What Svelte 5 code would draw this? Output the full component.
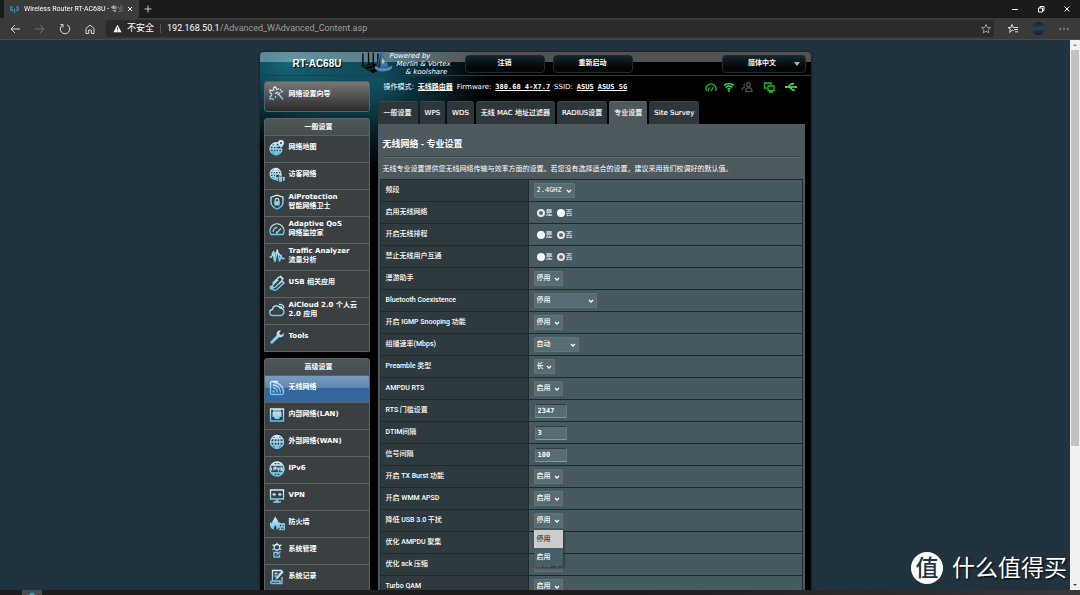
<script>
const statusLinks = [
  { label: '操作模式:', values: ['无线路由器'] },
  { label: 'Firmware:', values: ['380.68_4-X7.7'], mono: true },
  { label: 'SSID:', values: ['ASUS', 'ASUS_5G'], mono: true },
];

const tabs = ['一般设置', 'WPS', 'WDS', '无线 MAC 地址过滤器', 'RADIUS设置', '专业设置', 'Site Survey'];
let activeTab = '专业设置';

const globe = 'M8 1.5a6.5 6.5 0 1 0 0 13a6.5 6.5 0 0 0 0-13zM8 1.5v13M1.5 8h13M2.5 4.7h11M2.5 11.3h11M8 1.5c-4.2 3.5-4.2 9.5 0 13M8 1.5c4.2 3.5 4.2 9.5 0 13';

const menus = [
  {
    title: '一般设置',
    items: [
      { lines: ['网络地图'], stroke: 'M10 3.6A6 6 0 1 0 13 9M7 3v12M1 9h12M2 6h8M2 12h10M7 3c-4 3.5-4 8.5 0 12M7 15c2.5-2 3-4 3-6', fill: 'M12 0a3 3 0 0 0-3 3c0 2 3 5 3 5s3-3 3-5a3 3 0 0 0-3-3zm0 2a1 1 0 1 1 0 2a1 1 0 0 1 0-2z' },
      { lines: ['访客网络'], stroke: 'M12 6A5.5 5.5 0 1 0 7 12.5M6.5 1.5v11M1 7h11M2 4.3h9M2 9.7h5M6.5 1.5c-3.6 3-3.6 8 0 11M6.5 1.5c2 1.5 3 3 3 5', fill: 'M10 7.5a1.5 1.5 0 1 1 3 0a1.5 1.5 0 0 1-3 0zM9.5 9.5h4l-.7 5.5h-2.6zM7 10h2l.4 4H7.5zM14 10h2l-.5 4h-1.7z' },
      { lines: ['AiProtection', '智能网络卫士'], stroke: 'M8 1.2l6 2v5c0 3.5-3 5.5-6 6.8c-3-1.3-6-3.3-6-6.8v-5zM6.3 7.5v-1.5a1.7 1.7 0 0 1 3.4 0v1.5', fill: 'M5.3 7.3h5.4v4.2H5.3z' },
      { lines: ['Adaptive QoS', '网络监控家'], stroke: 'M2 13.5a7 7 0 1 1 12 0zM4.2 11a4.2 4.2 0 0 1 4-4.6M8 11.5l4-4', fill: 'M6.8 11.5a1.2 1.2 0 1 0 2.4 0a1.2 1.2 0 0 0-2.4 0z' },
      { lines: ['Traffic Analyzer', '流量分析'], stroke: 'M.5 9h2l1.5-4l2 9l2.3-12.5l2.2 12l1.700-5.5l1 2.5h2.5M3 6l2-3M5 12l1-8M9.5 5l2 3', fill: '' },
      { lines: ['USB 相关应用'], stroke: 'M3.5 8.5l6-6c2-1.5 4.5.5 3.5 3l-6.5 6.5c-2 1.5-4-.5-2.5-2.3l5-5M10 9l3-3l2 2l-7 6.5c-2 1.2-4 .5-5-.5M11 1l3.5 3', fill: 'M2 10l3 3.5l-2 1.5c-1.5 0-3-1.5-2.5-3z' },
      { lines: ['AiCloud 2.0 个人云', '2.0 应用'], stroke: 'M4 13.5a3 3 0 0 1-.5-6a4 4 0 0 1 7.5-1.5a3.8 3.8 0 0 1 1 7.5zM10 2.5c2.5-.5 4.5 1 5 3.5M10.5 4.7c1.5 0 2.3.6 2.7 2', fill: '' },
      { lines: ['Tools'], stroke: '', fill: 'M1.500 12.5l6.3-6.2C7 3.5 9 1 12 1.5L10.3 3.7l.5 1.7l1.7.5L14.8 4c.5 3-2 5-4.8 4.3L3.7 14.5c-1.5 1-3.2-.6-2.2-2z' },
    ],
  },
  {
    title: '高级设置',
    items: [
      { lines: ['无线网络'], active: true, stroke: 'M9 1.5H3a1.5 1.5 0 0 0-1.5 1.5v10A1.5 1.5 0 0 0 3 14.5h10a1.5 1.5 0 0 0 1.5-1.5v-3M4 8a4.5 4.5 0 0 1 4.5 4.5M4 5a7.5 7.5 0 0 1 7.5 7.5M4.5 2.3a10 10 0 0 1 10 10', fill: 'M3.5 10.5h2v2h-2z' },
      { lines: ['内部网络(LAN)'], stroke: 'M1.5 2h13v12h-13zM5 2v3M7 2v3M9 2v3M11 2v3', fill: 'M3.5 5h9v5h-2v2h-5v-2h-2z' },
      { lines: ['外部网络(WAN)'], stroke: globe, fill: '' },
      { lines: ['IPv6'], stroke: 'M8 1a7 7 0 1 0 0 14a7 7 0 0 0 0-14zM3 4h10M3 12h10M8 1v4M8 11v4M5 2v3M11 2v3M5 11v3M11 11v3M2.5 6.5v3M5 9.5v-3h2v1.7H5M8.5 6.5l1 3l1-3M13.5 6.5h-1.5v3h1.5v-1.5h-1.5', fill: '' },
      { lines: ['VPN'], stroke: 'M1.5 2h13v9h-13zM8 11v2.5M4 14h8M4.5 6.5h2.5M9 6.5h2.5', fill: 'M5.5 4.500v4l-2.5-2zM10.5 4.5v4l2.5-2zM6 12.5h4v2.5H6z' },
      { lines: ['防火墙'], stroke: 'M10 9h5.5v5.5H10M10 12h5.5M13 9v3M11.5 12v2.5', fill: 'M6 .8c.5 2.500 3.5 4 3.5 7.500c.7-.5.8-1.200.7-2c1.600 3 .8 7.200-3 8.500c1-2 .2-3.600-1.200-4.800c-.1 1.700-1.800 2.600-1 4.800C.8 13.700-.2 9.500 2 6.500c.1.900.4 1.500 1 2C3 5.500 6 4 6 .8z' },
      { lines: ['系统管理'], stroke: 'M8 2.5a2.800 2.800 0 1 0 0 5.600a2.800 2.800 0 0 0 0-5.600zM8 .7v1.800M8 8.100v1M3.500 2.700l2 1.200M12.500 2.700l-2 1.200M3.500 7.800l2-1.200M12.500 7.800l-2-1.200M9 10.500H5v4.500h5.500v-2.500M7.500 13l4-3.500', fill: '' },
      { lines: ['系统记录'], stroke: 'M3.5 12V1.5h9.5M13 8v6.5H2.5a1.300 1.300 0 0 1 0-2.5h8.500v2.5M5.500 4.500h3M5.500 7h2M7.500 10l6-7', fill: 'M7 8l6-6.5l1.700 1.500L8.500 9.800L6.500 10.500z' },
    ],
  },
];

const onOff = ['停用', '启用'];
const rows = [
  { label: '频段', type: 'select', options: ['2.4GHZ', '5GHZ'], value: '2.4GHZ', size: 'band' },
  { label: '启用无线网络', type: 'radio', value: '是' },
  { label: '开启无线排程', type: 'radio', value: '否' },
  { label: '禁止无线用户互通', type: 'radio', value: '否' },
  { label: '漫游助手', type: 'select', options: onOff, value: '停用' },
  { label: 'Bluetooth Coexistence', type: 'select', options: onOff, value: '停用', size: 'wide' },
  { label: '开启 IGMP Snooping 功能', type: 'select', options: onOff, value: '停用' },
  { label: '组播速率(Mbps)', type: 'select', options: ['自动'], value: '自动', size: 'medium' },
  { label: 'Preamble 类型', type: 'select', options: ['长', '短'], value: '长', size: 'short' },
  { label: 'AMPDU RTS', type: 'select', options: onOff, value: '启用' },
  { label: 'RTS 门槛设置', type: 'text', value: '2347' },
  { label: 'DTIM间隔', type: 'text', value: '3' },
  { label: '信号间隔', type: 'text', value: '100' },
  { label: '开启 TX Burst 功能', type: 'select', options: onOff, value: '启用' },
  { label: '开启 WMM APSD', type: 'select', options: onOff, value: '启用' },
  { label: '降低 USB 3.0 干扰', type: 'select', options: onOff, value: '停用', open: true },
  { label: '优化 AMPDU 聚集', type: 'select', options: onOff, value: '停用' },
  { label: '优化 ack 压缩', type: 'select', options: onOff, value: '停用' },
  { label: 'Turbo QAM', type: 'select', options: onOff, value: '启用' },
];
</script>

<svelte:head><title>Wireless Router RT-AC68U - 专业设置</title></svelte:head>

<svg class="defs" width="0" height="0" aria-hidden="true">
  <linearGradient id="ice" x1="0" y1="0" x2="0" y2="16" gradientUnits="userSpaceOnUse">
    <stop offset="0" stop-color="#e2f4fb" />
    <stop offset="1" stop-color="#58bfe8" />
  </linearGradient>
</svg>

<div class="browser">
  <div class="tabstrip">
    <div class="browser-tab">
      <svg class="favicon" viewBox="0 0 10 10"><path d="M3 1.5a3.5 3.5 0 0 0 0 5M7 1.5a3.5 3.5 0 0 1 0 5M1.5.8a5 5 0 0 0 0 6.4M8.5.8a5 5 0 0 1 0 6.4M5 4v5" /></svg>
      <span class="browser-title">Wireless Router RT-AC68U - 专业</span>
      <button class="plain" aria-label="关闭标签页"><svg viewBox="0 0 8 8"><path d="M2 2l4 4M6 2l-4 4" /></svg></button>
    </div>
    <button class="plain new-tab" aria-label="新建标签页"><svg viewBox="0 0 8 8"><path d="M4 .5v7M.5 4h7" /></svg></button>
    <div class="window-buttons">
      <button class="plain" aria-label="最小化"><svg viewBox="0 0 8 8"><path d="M1 4.5h6" /></svg></button>
      <button class="plain" aria-label="还原"><svg viewBox="0 0 8 8"><path d="M1.5 3h4v4h-4zM3 3V1.5h4v4H5.5" /></svg></button>
      <button class="plain" aria-label="关闭"><svg viewBox="0 0 8 8"><path d="M1.5 1.5l5 5M6.5 1.5l-5 5" /></svg></button>
    </div>
  </div>

  <div class="toolbar">
    <button class="plain nav" aria-label="后退"><svg viewBox="0 0 12 12"><path d="M11 6H2M6 2L2 6l4 4" /></svg></button>
    <button class="plain nav dim" aria-label="前进"><svg viewBox="0 0 12 12"><path d="M1 6h9M6 2l4 4l-4 4" /></svg></button>
    <button class="plain nav" aria-label="刷新"><svg viewBox="0 0 12 12"><path d="M4 1.8A4.7 4.7 0 1 0 8 1.8M4 4.5V1.5H1.5" /></svg></button>
    <button class="plain nav" aria-label="主页"><svg viewBox="0 0 12 12"><path d="M2 5.5L6 2l4 3.5V10.5H7.3V7H4.7v3.5H2z" /></svg></button>
    <div class="address">
      <svg class="warn" viewBox="0 0 10 10"><path d="M5 .8L9.5 9.2H.5z" fill="#fff" /><path d="M5 3.8v2.7M5 7.3v1" stroke="#2b2b2b" /></svg>
      <span class="insecure">不安全</span>
      <span class="url"><b>192.168.50.1</b>/Advanced_WAdvanced_Content.asp</span>
      <svg class="star" viewBox="0 0 12 12"><path d="M6 1.5l1.3 3l3.2.2l-2.5 2l.8 3.3L6 8.2L3.2 10L4 6.7l-2.5-2l3.2-.2z" /></svg>
    </div>
    <button class="plain nav tool" aria-label="收藏夹"><svg viewBox="0 0 12 12"><path d="M6.5 7.5L5 7L2.7 9.5L3.3 6L1 4.5h3L5 1.5l1.2 3H11M7 6.5h4M8 8.8h3" /></svg></button>
    <button class="avatar" aria-label="个人资料"></button>
    <button class="plain nav tool" aria-label="更多"><svg viewBox="0 0 12 12"><path d="M1.5 6h1.5M5.3 6h1.5M9 6h1.5" /></svg></button>
  </div>

  <div class="viewport">
    <div class="page">
      <div class="frame">
        <header>
          <h1>RT-AC68U</h1>
          <svg class="wizard" viewBox="0 0 34 26">
            <path class="antenna" d="M2 4v13M8 3v13M13 3v12M18 4v12" />
            <path d="M0 17l13-3l10 5l-10 6z" fill="#050607" />
            <path class="edge" d="M3 18l9-2M8 21l12-3" />
            <path d="M15 17c6 4 14 2 18 0c1 4-4 6-10 6s-9-2-8-6z" fill="#5585ba" />
            <path d="M16 18c3-4 2-10 4-14c1-3 4-3 5 0l-2 1c3 3 4 8 6 12c-4 3-9 3-13 1z" fill="#3c70a8" />
            <path d="M22 3c-3 4-2 10-5 15l4 1c-1-6-1-11 1-16z" fill="#15305a" />
            <path d="M23 8l1 3l2 1l-2 2l-1 2l-1-3z" fill="#d5c15c" />
          </svg>
          <p class="powered"><span>Powered by</span><span>Merlin &amp; Vortex</span><span>&amp; koolshare</span></p>
          <button class="pill">注销</button>
          <button class="pill">重新启动</button>
          <button class="pill language">简体中文<i></i></button>
        </header>

        <div class="columns">
          <nav>
            <a class="setup" href="#setup">
              <svg class="icon" viewBox="0 0 16 16"><path d="M10 2.5L8 3.5L6.5 1L4.7 1.5L4.5 4l-1.3.6L1 4v2.5l1.5 1v2L1 11v2l2.500-.3L5 14M8 6l6 7.500M8 6l-2 2M8.5 9l3-2.5M12 3l-1 1.5M14 5.5h-2M6.5 10v2" /></svg>
              <span>网络设置向导</span>
            </a>
            {#each menus as menu}
              <div class="menu">
                <h2>{menu.title}</h2>
                {#each menu.items as item}
                  <a class="menu-item" class:active={item.active} href="#menu">
                    <svg class="icon" viewBox="0 0 16 16"><path d={item.stroke} /><path class="solid" d={item.fill} /></svg>
                    <span>{#each item.lines as line}<span class="line">{line}</span>{/each}</span>
                  </a>
                {/each}
              </div>
            {/each}
          </nav>

          <main>
            <div class="status">
              {#each statusLinks as s}
                <span>{s.label}</span>
                {#each s.values as v}<a class:mono={s.mono} href="#status">{v}</a>{/each}
              {/each}
              <div class="status-icons">
                <svg viewBox="0 0 12 12"><path d="M1.5 10a5 5 0 1 1 9 0M3.5 10a3 3 0 0 1 2-3.5M6 10l2.5-4" /></svg>
                <svg class="light" viewBox="0 0 12 12"><path d="M1 4.5a7.5 7.5 0 0 1 10 0M2.7 6.5a5 5 0 0 1 6.6 0M4.5 8.3a2.5 2.5 0 0 1 3 0M6 9v2" /></svg>
                <svg class="off" viewBox="0 0 12 12"><path d="M7.5 1.5a2 2 0 1 1 0 4a2 2 0 0 1 0-4M4 2.5a2 2 0 0 0 0 3.5M4.5 10.5c0-5 6.5-5 6.5 0zM1 9.5c0-2 1-3 2.5-3" /></svg>
                <svg class="apart" viewBox="0 0 12 12"><path d="M4 7H1.500V2h6.500v2M5 5h6v4.500H5zM6 11h4" /></svg>
                <svg class="light apart" viewBox="0 0 12 12"><path d="M0 6h12M3 6l3-3h2M4.500 6l3 3h2M1 5v2M7.500 2.500h1.500M9 8.500v1.500M10.500 5v2" /></svg>
              </div>
            </div>

            <div class="tabs" role="tablist">
              {#each tabs as tab}
                <button role="tab" aria-selected={tab === activeTab} class:selected={tab === activeTab} on:click={() => activeTab = tab}>{tab}</button>
              {/each}
            </div>

            <section>
              <h3>无线网络 - 专业设置</h3>
              <p class="intro">无线专业设置提供您无线网络传输与效率方面的设置。若您没有选择适合的设置，建议采用我们校调好的默认值。</p>
              <table>
                <tbody>
                  {#each rows as row, i}
                    <tr>
                      <th scope="row"><label for={row.type === 'radio' ? `f${i}-是` : `f${i}`}>{row.label}</label></th>
                      <td>
                        {#if row.type === 'select'}
                          <span class="select {row.size || ''}">
                            <select id="f{i}" bind:value={row.value}>
                              {#each row.options as o}<option>{o}</option>{/each}
                            </select>
                            <svg viewBox="0 0 6 6"><path d="M1 2l2 2l2-2" /></svg>
                            {#if row.open}
                              <ul class="dropdown" role="listbox" aria-label={row.label}>
                                {#each row.options as o}
                                  <li role="option" aria-selected={o === row.value} class:current={o === row.value}>{o}</li>
                                {/each}
                              </ul>
                            {/if}
                          </span>
                        {:else if row.type === 'radio'}
                          <span class="radios">
                            {#each ['是', '否'] as o}
                              <input type="radio" id="f{i}-{o}" name="f{i}" value={o} bind:group={row.value} />
                              <label for="f{i}-{o}">{o}</label>
                            {/each}
                          </span>
                        {:else}
                          <input class="text" type="text" id="f{i}" bind:value={row.value} />
                        {/if}
                      </td>
                    </tr>
                  {/each}
                </tbody>
              </table>
            </section>
          </main>
        </div>
      </div>
    </div>

    <div class="scrollbar"><i class="up"></i><div class="thumb"></div><i class="down"></i></div>
    <div class="watermark"><span class="badge">值</span><span>什么值得买</span></div>
  </div>

  <div class="taskbar"><i></i></div>
</div>

<style>
:global(body) {
  margin: 0;
  background: #21333e;
}
.defs {
  position: absolute;
}
.browser {
  height: 100vh;
  display: flex;
  flex-direction: column;
  overflow: hidden;
  font-family: "DejaVu Sans", "Noto Sans CJK SC", sans-serif;
  font-size: 7px;
  line-height: 9px;
  color: #fff;
}
button, select, input {
  font: inherit;
  color: inherit;
  margin: 0;
}
h1, h2, h3, p, ul {
  margin: 0;
  padding: 0;
}
a {
  color: inherit;
  text-decoration: none;
}
svg {
  fill: none;
  stroke: currentColor;
  display: block;
  flex: none;
}

/* browser chrome */
.plain {
  background: none;
  border: 0;
  padding: 0;
}
.plain svg {
  width: 8px;
  height: 8px;
}
.tabstrip {
  display: flex;
  align-items: center;
  flex: none;
  height: 18px;
  background: #1b1b1b;
}
.browser-tab {
  display: flex;
  align-items: center;
  width: 135px;
  height: 18px;
  box-sizing: border-box;
  margin-left: 4px;
  padding: 0 5px 0 6px;
  background: #3b3b3b;
}
.favicon {
  width: 9px;
  height: 9px;
  margin-right: 5px;
  color: #3f9cc4;
}
.browser-title {
  flex: 1;
  white-space: nowrap;
  font-family: Roboto, "Noto Sans CJK SC", sans-serif;
  mask-image: linear-gradient(90deg, #000 85%, transparent);
}
.new-tab {
  margin-left: 5px;
  color: #ccc;
}
.window-buttons {
  display: flex;
  gap: 18px;
  margin-left: auto;
  padding-right: 9px;
}
.toolbar {
  display: flex;
  align-items: center;
  flex: none;
  height: 22px;
  box-sizing: border-box;
  padding: 0 10px 0 9px;
  gap: 13px;
  background: #3a3a3a;
  border-bottom: 1px solid #4a4a4a;
}
.nav svg {
  width: 12px;
  height: 12px;
  color: #d8d8d8;
}
.nav.dim svg {
  color: #707070;
}
.address {
  flex: 1;
  display: flex;
  align-items: center;
  height: 17px;
  margin-left: -3px;
  padding: 0 2px 0 7px;
  border-radius: 2px;
  background: #2b2b2b;
  font-family: Roboto, "Noto Sans CJK SC", sans-serif;
  font-size: 9px;
  line-height: 17px;
}
.warn {
  width: 9px;
  height: 9px;
  margin-right: 5px;
  stroke: none;
}
.insecure {
  padding-right: 6px;
  margin-right: 6px;
  border-right: 1px solid #555;
  line-height: 9px;
}
.url {
  flex: 1;
  color: #9b9b9b;
}
.url b {
  font-weight: 400;
  color: #fff;
}
.star {
  width: 12px;
  height: 12px;
  color: #999;
}
.avatar {
  width: 13px;
  height: 13px;
  padding: 0;
  border: 0;
  border-radius: 50%;
  background: linear-gradient(#15202c, #2c435c 50%, #131b26);
}

/* page */
.viewport {
  position: relative;
  flex: 1;
  min-height: 0;
  display: flex;
  background: #21333e;
}
.page {
  flex: 1;
  overflow: hidden;
  padding-top: 12px;
}
.frame {
  width: 551px;
  margin: 0 auto;
  padding-bottom: 20px;
  border-radius: 4px 4px 0 0;
  background:
    radial-gradient(ellipse 130px 90px at 30px 10px, #16677c, transparent),
    radial-gradient(ellipse 110px 90px at 120px 30px, #0f4554, transparent),
    #000;
  box-shadow: 0 0 3px #10191e;
}
header {
  display: flex;
  align-items: center;
  height: 23px;
  padding-right: 5px;
  border-bottom: 1px solid #2d3a3e;
  border-radius: 4px 4px 0 0;
  background: linear-gradient(rgba(255, 255, 255, 0.32) 10px, transparent 10px);
}
h1 {
  width: 101px;
  padding-left: 8px;
  box-sizing: border-box;
  font: bold 10px/12px "Liberation Sans", sans-serif;
  text-align: center;
  text-indent: 6px;
  text-shadow: 1px 1px 1px #000;
}
.wizard {
  width: 32px;
  height: 26px;
  margin-top: -4px;
  stroke: none;
}
.antenna {
  stroke: #07090b;
  stroke-width: 1.5;
}
.edge {
  stroke: #3a4347;
}
.powered {
  width: 72px;
  box-sizing: border-box;
  font: italic 7px/8px "DejaVu Sans", sans-serif;
  white-space: nowrap;
}
.powered span {
  display: block;
  margin-left: -3px;
}
.powered span:nth-child(2) {
  margin-left: 4px;
}
.powered span:nth-child(3) {
  margin-left: 13px;
}
.pill {
  width: 80px;
  height: 18px;
  margin-right: 8px;
  padding: 0;
  border: 1px solid #1c2b30;
  border-radius: 4px;
  background: linear-gradient(#13272d, #020506 70%);
  font-weight: bold;
}
.language {
  display: flex;
  align-items: center;
  justify-content: center;
  width: 84px;
  margin: 0 0 0 auto;
  padding-left: 21px;
}
.language i {
  margin-left: 18px;
  border: 3px solid transparent;
  border-top: 4px solid #9fb4c2;
  border-bottom: 0;
}
.columns {
  display: flex;
  padding: 5px 6px 0 4px;
  gap: 8px;
}

nav {
  flex: none;
  width: 106px;
  font-weight: bold;
}
.icon {
  width: 16px;
  height: 16px;
  margin-right: 4px;
}
.icon path {
  stroke: url(#ice);
  stroke-width: 1.3;
}
.icon .solid {
  fill: url(#ice);
  stroke: none;
}
.setup {
  display: flex;
  align-items: center;
  height: 31px;
  box-sizing: border-box;
  padding: 0 4px 5px;
  border: 1px solid #5d6163;
  border-radius: 3px;
  background: linear-gradient(#777, #2b2b2b);
}
.menu {
  margin-top: 6px;
  border: 1px solid #5a6467;
  border-radius: 3px 3px 0 0;
  background: #3a4042;
}
h2 {
  height: 16px;
  font-size: 7px;
  line-height: 16px;
  text-align: center;
  text-indent: 4px;
  background: linear-gradient(#50585b, #454d50);
}
.menu-item {
  display: flex;
  align-items: center;
  height: 27px;
  padding: 0 4px 3px;
  box-sizing: border-box;
  border-top: 1px solid #5a6467;
}
.menu-item.active {
  background: linear-gradient(#7b9bc0, #5f86b3 45%, #34659c 46%, #3467a0);
}
.line {
  display: block;
  white-space: nowrap;
}

main {
  flex: 1;
  min-width: 0;
}
.status {
  display: flex;
  align-items: center;
  height: 12px;
  padding-left: 6px;
  gap: 4px;
  white-space: nowrap;
}
.status a {
  font-weight: bold;
  text-decoration: underline;
}
.status .mono {
  font-family: "DejaVu Sans Mono", monospace;
}
.status-icons {
  display: flex;
  gap: 6px;
  margin-left: auto;
  padding-right: 8px;
  color: #10c020;
}
.status-icons svg {
  width: 12px;
  height: 12px;
  stroke-width: 1.3;
}
.status-icons .apart {
  margin-left: 4px;
}
.status-icons .light {
  color: #40f050;
}
.status-icons .off {
  color: #4a4a4a;
}
.tabs {
  display: flex;
  gap: 2px;
  margin-top: 8px;
}
.tabs button {
  height: 23px;
  padding: 0 5px;
  border: 1px solid #39464a;
  border-width: 1px 0 0;
  border-radius: 3px 3px 0 0;
  background: #2d373b;
  white-space: nowrap;
  text-shadow: 0 0 1px #aaa;
}
.tabs button:first-child {
  padding: 0 6px;
}
.tabs .selected {
  border-color: #5d6a6e;
  background: #4d595d;
}
section {
  padding: 14px 2px 30px;
  background: #4d595d;
}
h3 {
  margin: 0 3px;
  padding-bottom: 6px;
  border-bottom: 1px solid #3c484c;
  box-shadow: 0 1px #5f6c70;
  font: bold 9px/12px "Liberation Sans", "Noto Sans CJK SC", sans-serif;
}
.intro {
  margin: 7px 3px 5px;
  line-height: 10px;
}

table {
  width: 100%;
  border-collapse: collapse;
  font-family: Roboto, "Noto Sans CJK SC", sans-serif;
}
th, td {
  height: 21px;
  padding: 0 5px;
  border: 1px solid #202a2d;
  text-align: left;
}
th {
  width: 137px;
  font-weight: 500;
  background: #2f3a3e;
}
td {
  border-left: 0;
  background: #475a5f;
}
.select {
  position: relative;
  display: flex;
  align-items: center;
  width: 29px;
}
.select.band {
  width: 41px;
  font-family: "DejaVu Sans Mono", monospace;
}
.select.wide {
  width: 63px;
}
.select.medium {
  width: 45px;
}
.select.short {
  width: 21px;
}
select {
  appearance: none;
  width: 100%;
  height: 15px;
  padding: 0 2px;
  border: 1px solid #6b7071;
  border-radius: 1px;
  background: #576d73;
  font-weight: 500;
}
.select svg {
  position: absolute;
  right: 3px;
  width: 6px;
  height: 6px;
  stroke-width: 1.3;
  pointer-events: none;
}
.dropdown {
  position: absolute;
  z-index: 1;
  top: 17px;
  left: 0;
  right: 0;
  list-style: none;
  font-weight: 500;
  background: #475f66;
  box-shadow: 1px 2px 3px rgba(0, 0, 0, 0.5);
}
.dropdown li {
  padding: 0 3px;
  line-height: 18px;
}
.dropdown .current {
  color: #333;
  background: #ccc;
}
.radios {
  display: flex;
  align-items: center;
  padding-left: 3px;
}
.radios input {
  appearance: none;
  width: 8px;
  height: 8px;
  margin-right: 1px;
  border-radius: 50%;
  background: #fff;
}
.radios input:checked {
  border: 2px solid #e8e8e8;
  background: #666;
}
.radios label {
  margin-right: 4px;
  padding-top: 1px;
}
.text {
  display: block;
  width: 32px;
  height: 14px;
  box-sizing: border-box;
  margin-left: 1px;
  padding: 0 2px;
  border: 1px solid;
  border-color: #2d3d42 #66777b #8a9698 #66777b;
  background: #576d73;
  font-family: "DejaVu Sans Mono", monospace;
  font-weight: bold;
}

/* scrollbar, watermark, taskbar */
.scrollbar {
  display: flex;
  flex-direction: column;
  align-items: center;
  flex: none;
  width: 10px;
  background: #f0f0f0;
}
.scrollbar i {
  margin: 4px 0;
  border: 2px solid transparent;
}
.scrollbar .up {
  border-top: 0;
  border-bottom-color: #888;
}
.scrollbar .down {
  margin-top: auto;
  border-bottom: 0;
  border-top-color: #444;
}
.thumb {
  width: 8px;
  height: 72%;
  background: #c1c1c1;
}
.watermark {
  position: absolute;
  right: 13px;
  bottom: 6px;
  display: flex;
  gap: 9px;
  font: 23px/29px "Noto Sans CJK SC", sans-serif;
  text-shadow: 1px 1px 2px #000;
}
.badge {
  width: 32px;
  height: 32px;
  border-radius: 50%;
  background: #fff;
  color: #21333e;
  font-weight: 500;
  text-align: center;
  text-shadow: none;
}
.taskbar {
  flex: none;
  height: 5px;
  background: linear-gradient(90deg, #1d1c1f 60%, #39393b);
}
.taskbar i {
  display: block;
  width: 20px;
  height: 5px;
  margin-left: 22px;
  background: radial-gradient(circle at 10px 5px, #2fa6a6 2px, #4a4d4f 3px);
}
</style>
